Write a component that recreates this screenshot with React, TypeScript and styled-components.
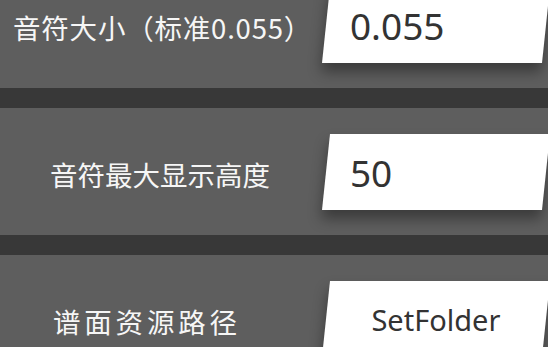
import styled, { createGlobalStyle } from "styled-components";

const GlobalStyle = createGlobalStyle`
  html, body {
    margin: 0;
    padding: 0;
    background: #383838;
  }
  body {
    font-family: "Noto Sans CJK SC", "Noto Sans", sans-serif;
  }
`;

type Setting = {
  label: string;
  value: string;
  indent: number;
  spacing: number;
  button?: boolean;
};

const settings: Setting[] = [
  { label: "音符大小（标准0.055）", value: "0.055", indent: 13, spacing: 0.8 },
  { label: "音符最大显示高度", value: "50", indent: 50, spacing: 0 },
  { label: "谱面资源路径", value: "SetFolder", indent: 53, spacing: 3.8, button: true },
];

export default function App() {
  return (
    <>
      <GlobalStyle />
      <Viewport>
        <SettingsList>
          {settings.map((s) => (
            <Row key={s.label}>
              <Label $indent={s.indent} $spacing={s.spacing}>
                {s.label}
              </Label>
              <Field>
                <FieldText $button={!!s.button}>{s.value}</FieldText>
              </Field>
            </Row>
          ))}
        </SettingsList>
      </Viewport>
    </>
  );
}

const Viewport = styled.div`
  width: 548px;
  height: 347px;
  overflow: hidden;
`;

const SettingsList = styled.div`
  display: flex;
  flex-direction: column;
  gap: 20px;
  margin-top: -39px;
  background: #383838;
`;

const Row = styled.div`
  height: 127px;
  display: flex;
  align-items: center;
  background: #5e5e5e;
`;

const Label = styled.div<{ $indent: number; $spacing: number }>`
  flex: 1;
  padding-left: ${(p) => p.$indent}px;
  padding-top: 4px;
  color: #f6f6f6;
  font-size: 27.5px;
  font-weight: 400;
  letter-spacing: ${(p) => p.$spacing}px;
  white-space: nowrap;
`;

const Field = styled.div`
  width: 220px;
  height: 76px;
  margin-right: 2px;
  background: #ffffff;
  transform: skewX(-6deg);
  box-shadow: 0 9px 14px rgba(0, 0, 0, 0.38);
  display: flex;
  align-items: center;
`;

const FieldText = styled.div<{ $button: boolean }>`
  flex: 1;
  transform: skewX(6deg);
  padding-left: ${(p) => (p.$button ? 0 : 24)}px;
  text-align: ${(p) => (p.$button ? "center" : "left")};
  font-family: "Noto Sans", sans-serif;
  font-size: ${(p) => (p.$button ? 29 : 37)}px;
  color: #333333;
  line-height: 1;
`;
